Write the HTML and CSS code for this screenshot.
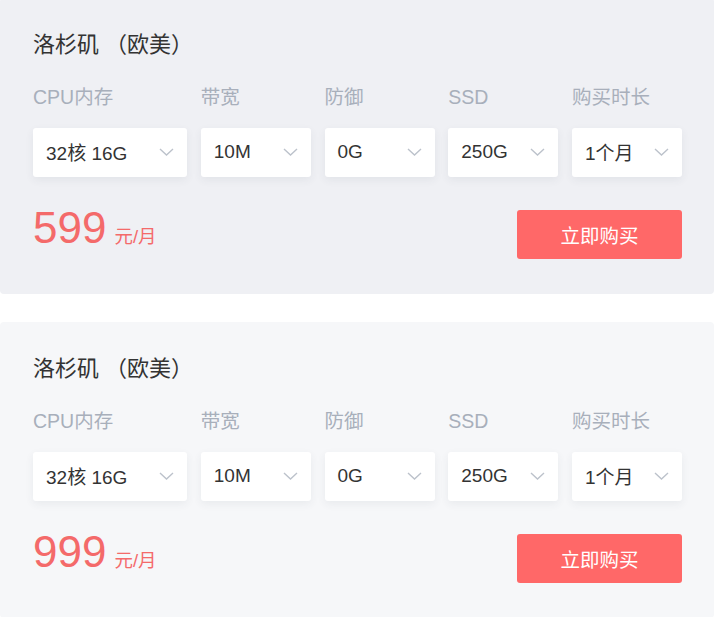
FILE: index.html
```html
<!DOCTYPE html>
<html lang="zh-CN">
<head>
<meta charset="utf-8">
<title>价格</title>
<link rel="stylesheet" href="styles.css">
</head>
<body>
<div class="list">
  <section class="card card-a">
    <h2 class="title">洛杉矶 （欧美）</h2>
    <div class="fields">
      <div class="field f-cpu">
        <div class="label">CPU内存</div>
        <div class="select"><span>32核 16G</span><svg class="chev" viewBox="0 0 15 8" width="15" height="8"><polyline points="1,1 7.5,7 14,1"/></svg></div>
      </div>
      <div class="field">
        <div class="label">带宽</div>
        <div class="select"><span>10M</span><svg class="chev" viewBox="0 0 15 8" width="15" height="8"><polyline points="1,1 7.5,7 14,1"/></svg></div>
      </div>
      <div class="field">
        <div class="label">防御</div>
        <div class="select"><span>0G</span><svg class="chev" viewBox="0 0 15 8" width="15" height="8"><polyline points="1,1 7.5,7 14,1"/></svg></div>
      </div>
      <div class="field">
        <div class="label">SSD</div>
        <div class="select"><span>250G</span><svg class="chev" viewBox="0 0 15 8" width="15" height="8"><polyline points="1,1 7.5,7 14,1"/></svg></div>
      </div>
      <div class="field">
        <div class="label">购买时长</div>
        <div class="select"><span>1个月</span><svg class="chev" viewBox="0 0 15 8" width="15" height="8"><polyline points="1,1 7.5,7 14,1"/></svg></div>
      </div>
    </div>
    <div class="foot">
      <div class="price"><span class="num">599</span><span class="unit">元/月</span></div>
      <button class="buy">立即购买</button>
    </div>
  </section>

  <section class="card card-b">
    <h2 class="title">洛杉矶 （欧美）</h2>
    <div class="fields">
      <div class="field f-cpu">
        <div class="label">CPU内存</div>
        <div class="select"><span>32核 16G</span><svg class="chev" viewBox="0 0 15 8" width="15" height="8"><polyline points="1,1 7.5,7 14,1"/></svg></div>
      </div>
      <div class="field">
        <div class="label">带宽</div>
        <div class="select"><span>10M</span><svg class="chev" viewBox="0 0 15 8" width="15" height="8"><polyline points="1,1 7.5,7 14,1"/></svg></div>
      </div>
      <div class="field">
        <div class="label">防御</div>
        <div class="select"><span>0G</span><svg class="chev" viewBox="0 0 15 8" width="15" height="8"><polyline points="1,1 7.5,7 14,1"/></svg></div>
      </div>
      <div class="field">
        <div class="label">SSD</div>
        <div class="select"><span>250G</span><svg class="chev" viewBox="0 0 15 8" width="15" height="8"><polyline points="1,1 7.5,7 14,1"/></svg></div>
      </div>
      <div class="field">
        <div class="label">购买时长</div>
        <div class="select"><span>1个月</span><svg class="chev" viewBox="0 0 15 8" width="15" height="8"><polyline points="1,1 7.5,7 14,1"/></svg></div>
      </div>
    </div>
    <div class="foot">
      <div class="price"><span class="num">999</span><span class="unit">元/月</span></div>
      <button class="buy">立即购买</button>
    </div>
  </section>
</div>
</body>
</html>
```

FILE: styles.css
```css
html, body {
  margin: 0;
  padding: 0;
  background: #ffffff;
}
body {
  font-family: "Liberation Sans", "Noto Sans CJK SC", sans-serif;
  color: #333333;
  overflow: hidden;
}
.list {
  margin-top: -2px;
  display: flex;
  flex-direction: column;
  gap: 28px;
}
.card {
  box-sizing: border-box;
  width: 714px;
  height: 296px;
  padding: 32px 32px 0 33px;
  border-radius: 4px;
}
.card-a { background: #eff0f4; }
.card-b { background: #f6f7f9; }
.title {
  margin: 0;
  font-size: 22px;
  font-weight: normal;
  line-height: 30px;
  color: #333333;
}
.fields {
  margin-top: 24px;
  display: flex;
  justify-content: space-between;
}
.field {
  width: 110px;
}
.field.f-cpu {
  width: 154px;
}
.label {
  font-size: 19.5px;
  line-height: 26px;
  color: #a8afbb;
  white-space: nowrap;
}
.select {
  margin-top: 18px;
  box-sizing: border-box;
  height: 49px;
  padding: 0 13px 2px 13px;
  background: #ffffff;
  border-radius: 3px;
  box-shadow: 0 3px 8px rgba(60, 70, 90, 0.07);
  display: flex;
  align-items: center;
  justify-content: space-between;
  font-size: 19px;
  color: #333333;
  white-space: nowrap;
}
.chev {
  flex: none;
  fill: none;
  stroke: #bcc2cb;
  stroke-width: 1.4;
}
.foot {
  margin-top: 33px;
  display: flex;
  justify-content: space-between;
  align-items: flex-start;
}
.price {
  color: #f46a6a;
  font-size: 44px;
  line-height: 36px;
  height: 36px;
  white-space: nowrap;
}
.num {
  font-size: 44px;
}
.unit {
  font-size: 18.5px;
  line-height: 18px;
  margin-left: 8px;
}
.buy {
  width: 165px;
  height: 49px;
  border: 0;
  border-radius: 3px;
  background: #ff6868;
  color: #ffffff;
  font-family: "Liberation Sans", "Noto Sans CJK SC", sans-serif;
  font-size: 19.5px;
  padding: 0;
  cursor: pointer;
}
```
